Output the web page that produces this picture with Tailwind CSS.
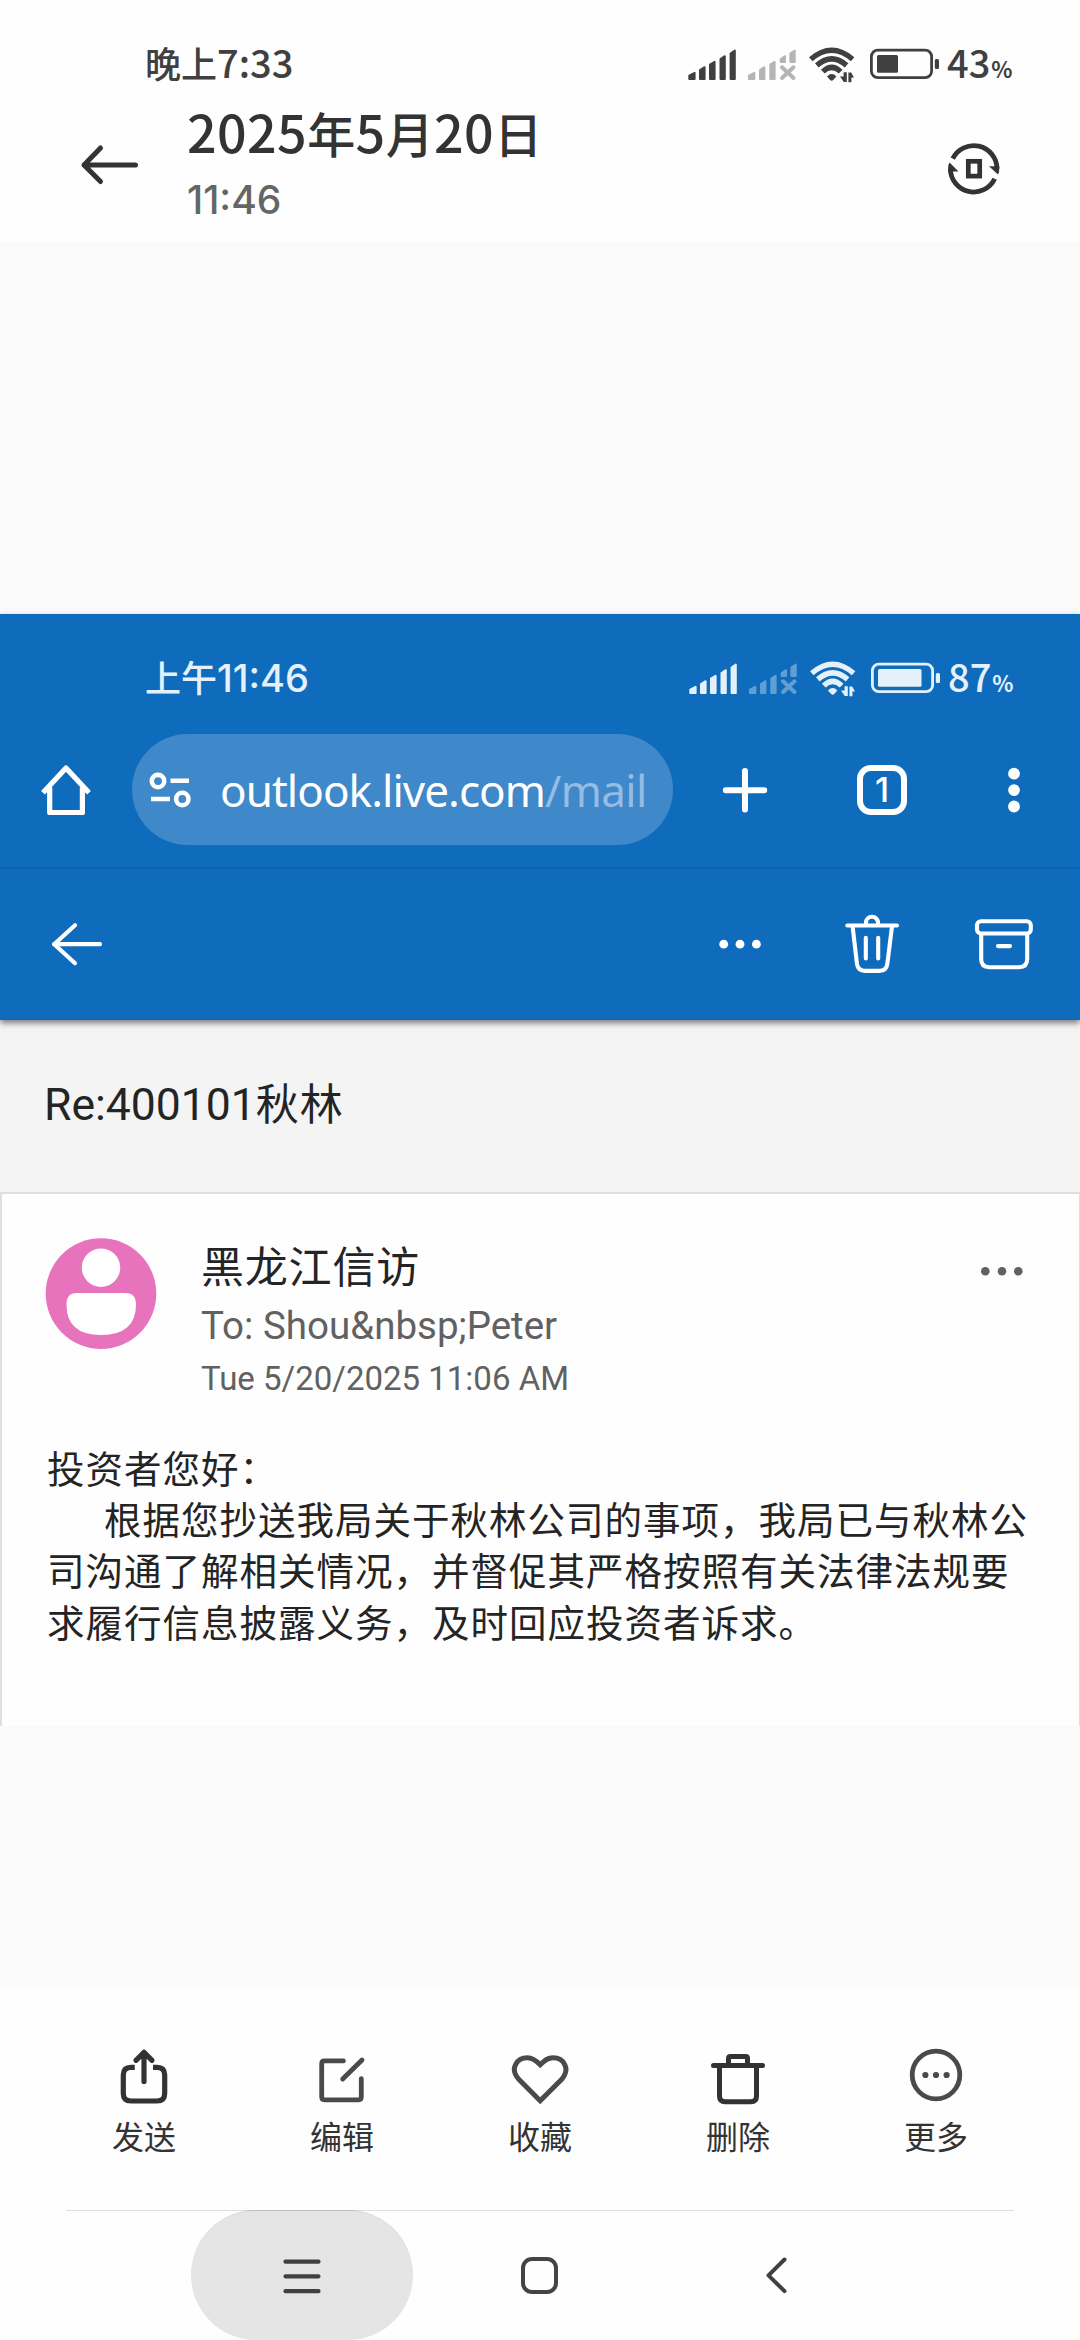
<!DOCTYPE html>
<html lang="zh-CN">
<head>
<meta charset="utf-8">
<meta name="viewport" content="width=device-width, initial-scale=1">
<title>相册</title>
<script src="https://cdn.jsdelivr.net/npm/@tailwindcss/browser@4"></script>
</head>
<body class="bg-[#fbfbfb]">
<svg width="0" height="0" class="absolute">
  <defs>
    <symbol id="signals" viewBox="686 42 172 42" overflow="visible">
      <g fill="currentColor" stroke="currentColor" stroke-width="2" stroke-linejoin="round">
        <path d="M689.3 79V75.6L694.6 72.8V79ZM700 79V70L704.6 67.2V79ZM710 79V64.6L714.6 61.8V79ZM720.5 79V59L724.8 56.2V79ZM730.6 79V53.6L734.8 50.6V79Z"/>
      </g>
      <g class="opacity-[0.38]">
        <path fill="currentColor" stroke="currentColor" stroke-width="2" stroke-linejoin="round" d="M749 79V75.6L754.3 72.8V79ZM760 79V70L764.4 67.2V79ZM770.3 79V64.6L774.6 61.8V79ZM780.7 62V59L785 56.2V62ZM790.4 62V53.6L794.7 50.6V62Z"/>
        <path fill="none" stroke="currentColor" stroke-width="4" stroke-linecap="round" d="M782 67.3L793.5 78M793.5 67.3L782 78"/>
      </g>
      <g fill="none" stroke="currentColor" stroke-width="5.4">
        <path d="M810.8 59.2Q831.7 41.2 852.6 59.2"/>
        <path d="M816.8 65.4Q831.7 52.4 846.6 65.4"/>
        <path d="M822.8 71.6Q831.7 63 840.6 71.6"/>
      </g>
      <path fill="currentColor" d="M827 76.4Q831.7 71.8 836.4 76.4L833.2 80Q831.7 81.4 830.2 80Z"/>
      <path fill="currentColor" d="M846.8 72.3V82H843.8L840 76.6H843.6V72.3ZM848.4 82.3V72.6H851.2L854 77.6H851.4V82.3Z"/>
    </symbol>
    <symbol id="battery" viewBox="868 42 74 42" overflow="visible">
      <rect x="871.4" y="50.1" width="60.2" height="27.6" rx="6.5" fill="none" stroke="currentColor" stroke-width="2.8"/>
      <rect x="934.8" y="59" width="4.2" height="10" rx="1.5" fill="currentColor"/>
    </symbol>
  </defs>
</svg>

<div class="w-[1080px] h-[2340px] flex flex-col overflow-hidden font-['Noto_Sans_CJK_SC',sans-serif]">
  <header class="h-[242px] shrink-0 bg-[#fefefe] pt-[42px]">
    <div class="h-10 flex items-center pl-[145px] text-[#404040] font-medium">
      <div class="w-[541px] h-10 leading-10 text-[38px] whitespace-nowrap"><span class="text-[36px] leading-none">晚上</span>7:33</div>
      <svg class="w-[172px] h-[42px] mt-0.5 shrink-0"><use href="#signals"/></svg>
      <svg class="w-[74px] h-[42px] mt-0.5 ml-[10px] shrink-0" viewBox="868 42 74 42"><use href="#battery" x="868" y="42" width="74" height="42"/><rect x="877" y="55" width="21" height="17.7" rx="1.5" fill="currentColor"/></svg>
      <div class="ml-[5px] h-10 leading-10 text-[38px] whitespace-nowrap">43<span class="ml-px text-[22px] leading-none font-bold">%</span></div>
    </div>
    <div class="h-40 flex">
      <svg class="w-[64px] h-[160px] ml-[78px] shrink-0" viewBox="78 82 64 160" fill="none" stroke="#333" stroke-width="5" stroke-linecap="round" stroke-linejoin="round"><path d="M135.5 165H84M100.5 148L84 165L100.5 181.5"/></svg>
      <div class="ml-[45px] mt-[17px] flex-1 whitespace-nowrap">
        <div class="h-16 leading-16 text-[52px] font-medium text-[#333] tracking-[0.4px]">2025<span class="text-[48px] leading-none">年</span>5<span class="text-[48px] leading-none">月</span>20<span class="text-[48px] leading-none">日</span></div>
        <div class="mt-[13px] h-12 leading-12 text-[39px] font-medium text-[#646666] font-['Inter',sans-serif]">11:46</div>
      </div>
      <svg class="w-[60px] h-[160px] mr-[76px] shrink-0" viewBox="944 82 60 160" fill="none" stroke="#333" stroke-width="4.8">
        <path d="M952.8 158.6A23.3 23.3 0 0 1 997 168.7"/><path d="M994.7 178.8A23.3 23.3 0 0 1 950.4 168.7"/>
        <path d="M989 166.2H999.4L999 172L998 174.6Z" fill="#333" stroke="none"/><path d="M958.5 171.400H948L948.300 165.500L949.600 162.600Z" fill="#333" stroke="none"/>
        <rect x="968.3" y="161.3" width="11.4" height="14.8" stroke-width="4.7"/>
      </svg>
    </div>
  </header>

  <main class="mt-[372px] h-[1112px] shrink-0 bg-[#fefefe] flex flex-col">
    <section class="relative h-[406px] shrink-0 bg-[#0f6cbd] text-white shadow-[0_3px_6px_rgba(0,0,0,0.5)] pt-[42px]">
      <div class="h-10 flex items-center pl-[145px] text-[#e4f1fb] font-medium">
        <div class="w-[542px] h-10 leading-10 text-[38px] whitespace-nowrap"><span class="text-[36px] leading-none">上午</span><span class="leading-none font-['Inter',sans-serif]">11:46</span></div>
        <svg class="w-[172px] h-[42px] mt-0.5 shrink-0"><use href="#signals"/></svg>
        <svg class="w-[74px] h-[42px] mt-0.5 ml-[10px] shrink-0" viewBox="868 42 74 42"><use href="#battery" x="868" y="42" width="74" height="42"/><rect x="877" y="55" width="43.5" height="17.7" rx="1.5" fill="currentColor"/></svg>
        <div class="ml-[5px] h-10 leading-10 text-[38px] whitespace-nowrap">87<span class="ml-px text-[22px] leading-none font-bold">%</span></div>
      </div>
      <div class="mt-4 h-[155px] flex items-center">
        <svg class="w-[60px] h-[60px] ml-9 shrink-0" viewBox="36 759.5 60 60" fill="none" stroke="#fff" stroke-width="5.2" stroke-linejoin="round"><path d="M43 792.3L66 767.5L89 792.3M49.7 787V812H82.4V787" /></svg>
        <div class="ml-9 w-[541px] h-[111px] rounded-full bg-[#3f88c9] flex items-center">
          <svg class="w-[44px] h-[40px] ml-4 shrink-0" viewBox="148 769.5 44 40" fill="none" stroke="#fff" stroke-width="4.6"><circle cx="158" cy="780.6" r="6.2"/><path d="M170.5 780.3H189M151 798.5H170"/><circle cx="182.3" cy="798.5" r="6.2"/></svg>
          <div class="ml-7 h-[60px] leading-[60px] text-[44px] tracking-[-0.950px] font-['Noto_Sans',sans-serif] whitespace-nowrap">outlook.live.com<span class="text-[#93bde4] tracking-[-0.600px]">/mail</span></div>
        </div>
        <svg class="w-[60px] h-[60px] ml-[42px] shrink-0" viewBox="715 759.5 60 60" stroke="#fff" stroke-width="6" stroke-linecap="round"><path d="M745 770.5V809M725.8 789.7H764.2"/></svg>
        <div class="ml-[82px] w-[50px] h-[50px] rounded-[14px] border-[6px] border-white flex items-center justify-center text-[34px] leading-[38px] font-medium font-['Inter',sans-serif]"><span>1</span></div>
        <svg class="w-[20px] h-[60px] ml-[97px] shrink-0" viewBox="1004 759.5 20 60" fill="#fff"><circle cx="1014" cy="773.2" r="5.9"/><circle cx="1014" cy="789.6" r="5.9"/><circle cx="1014" cy="806" r="5.9"/></svg>
      </div>
      <div class="h-[2px] bg-[#0d60aa]"></div>
      <div class="h-[151px] flex items-center">
        <svg class="w-[60px] h-[60px] ml-12 shrink-0" viewBox="48 914.5 60 60" fill="none" stroke="#fff" stroke-width="4.2" stroke-linecap="round" stroke-linejoin="round"><path d="M100 943.7H54M75 924.7L54.2 943.7L75 962.7"/></svg>
        <svg class="w-[50px] h-[60px] ml-auto shrink-0" viewBox="715 914.5 50 60" fill="#fff"><circle cx="723.7" cy="943.7" r="4.4"/><circle cx="740" cy="943.7" r="4.4"/><circle cx="756.4" cy="943.7" r="4.4"/></svg>
        <svg class="w-[60px] h-[60px] ml-[77px] shrink-0" viewBox="842 914.5 60 60" fill="none" stroke="#fff" stroke-width="4.1" stroke-linecap="round" overflow="visible"><path d="M847.3 925H897M866 924V922.3A6 6 0 0 1 878 922.3V924M852.6 926L857 963.5Q858 970.4 865 970.4H879.4Q886.300 970.4 887.300 963.5L892 926M865.8 937.3V958M878.200 937.3V958"/></svg>
        <svg class="w-[64px] h-[60px] ml-[70px] mr-[44px] shrink-0" viewBox="972 914.5 64 60" fill="none" stroke="#fff" stroke-width="4.1" stroke-linecap="round"><rect x="977" y="920.8" width="53.8" height="12.200" rx="4"/><path d="M981.200 934V958.500Q981.200 966.700 989.400 966.700H1019Q1027.200 966.700 1027.200 958.500V934M998 945.6H1010"/></svg>
      </div>
    </section>
    <div class="h-[172px] shrink-0 bg-[#f4f4f4] pl-[44px] pt-[55px]">
      <div class="h-[60px] leading-[60px] text-[44.500px] text-[#242424] font-['Roboto','Noto_Sans_CJK_SC',sans-serif]">Re:400101<span class="text-[43px] tracking-[1px]">秋林</span></div>
    </div>
    <article class="flex-1 border-t-2 border-l-2 border-r border-[#dfdfdf] text-[#242424]">
      <div class="h-[236px] flex">
        <svg class="w-[112px] h-[112px] ml-[43px] mt-[44px] shrink-0" viewBox="45 1238 112 112"><circle cx="101" cy="1293.600" r="55.300" fill="#e773bd"/><circle cx="101" cy="1267.700" r="19.200" fill="#fff"/><path fill="#fff" d="M76.500 1293H125.500Q136 1293 136 1304.500Q136 1335 101 1335Q66.500 1335 66.500 1304.500Q66.500 1293 76.500 1293Z"/></svg>
        <div class="ml-11 mt-[40px] flex-1 whitespace-nowrap">
          <div class="h-[60px] leading-[60px] text-[43px] tracking-[0.800px]">黑龙江信访</div>
          <div class="mt-[3px] h-[58px] leading-[58px] text-[38.500px] text-[#616161] font-['Roboto',sans-serif]">To: Shou&amp;nbsp;Peter</div>
          <div class="-mt-px h-[50px] leading-[50px] text-[33px] text-[#616161] font-['Roboto',sans-serif]">Tue 5/20/2025 11:06 AM</div>
        </div>
        <svg class="w-[50px] h-[20px] mt-[67px] mr-[52px] shrink-0" viewBox="977 1261 50 20" fill="#616161"><circle cx="985.300" cy="1271.300" r="4.300"/><circle cx="1002" cy="1271.300" r="4.300"/><circle cx="1018.300" cy="1271.300" r="4.300"/></svg>
      </div>
      <div class="mt-[11px] ml-[45px] text-[37.500px] leading-[51.200px] tracking-[1px] whitespace-nowrap">
        <p>投资者您好：</p>
        <p class="pl-[57px]">根据您抄送我局关于秋林公司的事项，我局已与秋林公</p>
        <p>司沟通了解相关情况，并督促其严格按照有关法律法规要</p>
        <p>求履行信息披露义务，及时回应投资者诉求。</p>
      </div>
    </article>
  </main>

  <footer class="mt-[263px] h-[351px] shrink-0 bg-[#fefefe]">
    <div class="h-[221px] px-[45px] grid grid-cols-5 justify-items-center text-[32px] text-[#333] leading-10">
      <div class="flex flex-col items-center pt-[51px]">
        <svg class="w-[60px] h-[76px]" viewBox="114 2040 60 76" fill="none" stroke="#333" stroke-width="5.200" stroke-linecap="round" stroke-linejoin="round"><path stroke-linecap="butt" d="M134.800 2067.400H131Q123.300 2067.400 123.300 2075V2093.500Q123.300 2101 131 2101H157Q164.700 2101 164.700 2093.500V2075Q164.700 2067.400 157 2067.400H153"/><path d="M144 2081.500V2053M136 2060.300L144 2052.300L152 2060.300"/></svg>
        <span class="-mt-px">发送</span>
      </div>
      <div class="flex flex-col items-center pt-[51px]">
        <svg class="w-[60px] h-[76px]" viewBox="312 2040 60 76" fill="none" stroke="#4a4a4a" stroke-width="4.800" stroke-linecap="round" stroke-linejoin="round"><path d="M343.400 2060.900H324.500Q321.700 2060.900 321.700 2063.700V2097Q321.700 2099.800 324.500 2099.800H358.500Q361.300 2099.800 361.300 2097V2078.700M342.700 2079L362 2060"/></svg>
        <span class="-mt-px">编辑</span>
      </div>
      <div class="flex flex-col items-center pt-[51px]">
        <svg class="w-[60px] h-[76px]" viewBox="511 2040 60 76" fill="none" stroke="#4a4a4a" stroke-width="5" stroke-linejoin="round"><path stroke-linejoin="miter" d="M541.200 2100.800L520 2079.500C510 2068.500 518 2057.800 528.500 2057.800C533.500 2057.800 536.500 2060 541.200 2064.800C546 2060 549 2057.800 554 2057.800C564.500 2057.800 572 2068.500 562.500 2079.500Z"/></svg>
        <span class="-mt-px">收藏</span>
      </div>
      <div class="flex flex-col items-center pt-[51px]">
        <svg class="w-[60px] h-[76px]" viewBox="708 2040 60 76" fill="none" stroke="#333" stroke-width="5" stroke-linecap="round" stroke-linejoin="round"><path d="M713.500 2065.600H762.500M728.500 2064V2058.500Q728.500 2056.600 730.500 2056.600H745.500Q747.500 2056.600 747.500 2058.500V2064M719.500 2067V2096Q719.500 2101.800 725.300 2101.800H750.700Q756.500 2101.800 756.500 2096V2067"/></svg>
        <span class="-mt-px">删除</span>
      </div>
      <div class="flex flex-col items-center pt-[51px]">
        <svg class="w-[60px] h-[76px]" viewBox="906 2040 60 76" fill="none" stroke="#4a4a4a" stroke-width="4.800"><circle cx="936" cy="2075" r="23.800"/><g fill="#4a4a4a" stroke="none"><circle cx="925.400" cy="2075" r="3.100"/><circle cx="936" cy="2075" r="3.100"/><circle cx="946.600" cy="2075" r="3.100"/></g></svg>
        <span class="-mt-px">更多</span>
      </div>
    </div>
    <nav class="relative h-[130px] flex items-center">
      <div class="absolute inset-x-[66px] top-0 h-px bg-black/12"></div>
      <div class="ml-[191px] w-[222px] h-[130px] rounded-full bg-[#e5e5e5] border-t border-[#cfcfcf]/60 flex items-center justify-center">
        <svg class="w-10 h-10" viewBox="282.500 2255 40 40" stroke="#404040" stroke-width="4.200" stroke-linecap="round"><path d="M286 2260.700H319M286 2275.300H319M286 2290.200H319"/></svg>
      </div>
      <div class="ml-[108px] w-[37px] h-[37px] rounded-[11px] border-4 border-[#444]"></div>
      <svg class="w-[30px] h-10 ml-[203px]" viewBox="761 2255 30 40" fill="none" stroke="#404040" stroke-width="4" stroke-linecap="round" stroke-linejoin="round"><path d="M784.500 2259.500L768.500 2275.300L784.500 2291.200"/></svg>
    </nav>
  </footer>
</div>
</body>
</html>
